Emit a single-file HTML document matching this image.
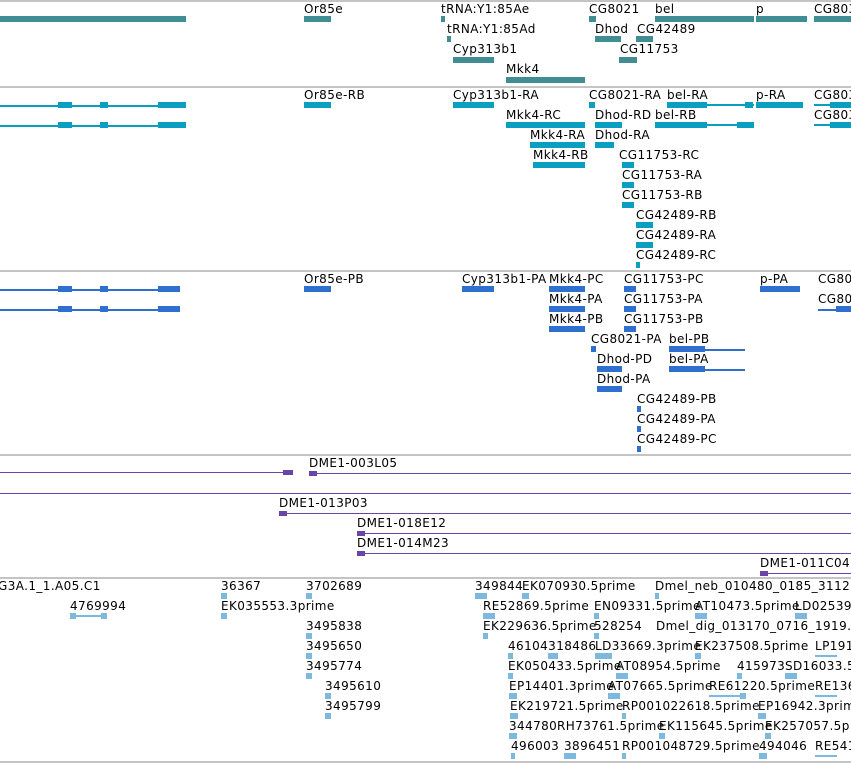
<!DOCTYPE html><html><head><style>
body{margin:0;width:851px;height:763px;background:#fff;position:relative;overflow:hidden;font-family:"DejaVu Sans","Liberation Sans",sans-serif}
.l{position:absolute;font-size:12px;line-height:13px;color:#000;white-space:nowrap;letter-spacing:0.4px}
.b{position:absolute;height:6px}
.t{position:absolute;height:2px}
.hr{position:absolute;left:0;width:851px;height:2px;background:#c4c4c4}
.g{background:#408e94}.c{background:#0a9fc0}.p{background:#2f6fcf}.v{background:#6a45a8}.s{background:#7db8df}
</style></head><body>
<div class="hr" style="top:0"></div><div class="hr" style="top:86px"></div><div class="hr" style="top:270px"></div><div class="hr" style="top:454px"></div><div class="hr" style="top:577px"></div><div class="hr" style="top:761px"></div>

<div class="b g" style="left:0;top:16px;width:186px"></div>
<div class="l" style="left:304px;top:3px">Or85e</div><div class="b g" style="left:304px;top:16px;width:27px"></div>
<div class="l" style="left:441px;top:3px">tRNA:Y1:85Ae</div><div class="b g" style="left:441px;top:16px;width:4px"></div>
<div class="l" style="left:447px;top:23px">tRNA:Y1:85Ad</div><div class="b g" style="left:447px;top:36px;width:4px"></div>
<div class="l" style="left:453px;top:43px">Cyp313b1</div><div class="b g" style="left:453px;top:57px;width:41px"></div>
<div class="l" style="left:506px;top:63px">Mkk4</div><div class="b g" style="left:506px;top:77px;width:79px"></div>
<div class="l" style="left:589px;top:3px">CG8021</div><div class="b g" style="left:589px;top:16px;width:7px"></div>
<div class="l" style="left:595px;top:23px">Dhod</div><div class="b g" style="left:595px;top:36px;width:26px"></div>
<div class="l" style="left:637px;top:23px">CG42489</div><div class="b g" style="left:636px;top:36px;width:17px"></div>
<div class="l" style="left:620px;top:43px">CG11753</div><div class="b g" style="left:619px;top:57px;width:18px"></div>
<div class="l" style="left:655px;top:3px">bel</div><div class="b g" style="left:655px;top:16px;width:99px"></div>
<div class="l" style="left:756px;top:3px">p</div><div class="b g" style="left:756px;top:16px;width:51px"></div>
<div class="l" style="left:814px;top:3px">CG803</div><div class="b g" style="left:814px;top:16px;width:37px"></div>

<div class="t c" style="left:0;top:105px;width:160px"></div><div class="b c" style="left:158px;top:102px;width:28px"></div>
<div class="b c" style="left:58px;top:102px;width:14px"></div><div class="b c" style="left:100px;top:102px;width:8px"></div>
<div class="t c" style="left:0;top:125px;width:160px"></div><div class="b c" style="left:158px;top:122px;width:28px"></div>
<div class="b c" style="left:58px;top:122px;width:14px"></div><div class="b c" style="left:100px;top:122px;width:8px"></div>
<div class="l" style="left:304px;top:89px">Or85e-RB</div><div class="b c" style="left:304px;top:102px;width:27px"></div>
<div class="l" style="left:453px;top:89px">Cyp313b1-RA</div><div class="b c" style="left:453px;top:102px;width:41px"></div>
<div class="l" style="left:589px;top:89px">CG8021-RA</div><div class="b c" style="left:589px;top:102px;width:6px"></div>
<div class="l" style="left:667px;top:89px">bel-RA</div><div class="b c" style="left:667px;top:102px;width:40px"></div><div class="t c" style="left:707px;top:104px;width:47px"></div><div class="b c" style="left:745px;top:102px;width:8px"></div>
<div class="l" style="left:756px;top:89px">p-RA</div><div class="b c" style="left:756px;top:102px;width:47px"></div>
<div class="l" style="left:814px;top:89px">CG803</div><div class="t c" style="left:814px;top:104px;width:37px"></div><div class="b c" style="left:830px;top:102px;width:21px"></div>
<div class="l" style="left:506px;top:109px">Mkk4-RC</div><div class="b c" style="left:506px;top:122px;width:79px"></div>
<div class="l" style="left:595px;top:109px">Dhod-RD</div><div class="b c" style="left:595px;top:122px;width:27px"></div>
<div class="l" style="left:655px;top:109px">bel-RB</div><div class="b c" style="left:655px;top:122px;width:52px"></div><div class="t c" style="left:707px;top:124px;width:47px"></div><div class="b c" style="left:737px;top:122px;width:17px"></div>
<div class="l" style="left:814px;top:109px">CG803</div><div class="t c" style="left:814px;top:124px;width:37px"></div><div class="b c" style="left:830px;top:122px;width:21px"></div>
<div class="l" style="left:530px;top:129px">Mkk4-RA</div><div class="b c" style="left:530px;top:142px;width:55px"></div>
<div class="l" style="left:595px;top:129px">Dhod-RA</div><div class="b c" style="left:595px;top:142px;width:19px"></div>
<div class="l" style="left:533px;top:149px">Mkk4-RB</div><div class="b c" style="left:533px;top:162px;width:52px"></div>
<div class="l" style="left:619px;top:149px">CG11753-RC</div><div class="b c" style="left:622px;top:162px;width:12px"></div>
<div class="l" style="left:622px;top:169px">CG11753-RA</div><div class="b c" style="left:622px;top:182px;width:12px"></div>
<div class="l" style="left:622px;top:189px">CG11753-RB</div><div class="b c" style="left:622px;top:202px;width:12px"></div>
<div class="l" style="left:636px;top:209px">CG42489-RB</div><div class="b c" style="left:636px;top:222px;width:17px"></div>
<div class="l" style="left:636px;top:229px">CG42489-RA</div><div class="b c" style="left:636px;top:242px;width:17px"></div>
<div class="l" style="left:636px;top:249px">CG42489-RC</div><div class="b c" style="left:636px;top:262px;width:4px"></div>

<div class="t p" style="left:0;top:289px;width:160px"></div><div class="b p" style="left:158px;top:286px;width:22px"></div>
<div class="b p" style="left:58px;top:286px;width:14px"></div><div class="b p" style="left:100px;top:286px;width:8px"></div>
<div class="t p" style="left:0;top:309px;width:160px"></div><div class="b p" style="left:158px;top:306px;width:22px"></div>
<div class="b p" style="left:58px;top:306px;width:14px"></div><div class="b p" style="left:100px;top:306px;width:8px"></div>
<div class="l" style="left:304px;top:273px">Or85e-PB</div><div class="b p" style="left:304px;top:286px;width:27px"></div>
<div class="l" style="left:462px;top:273px">Cyp313b1-PA</div><div class="b p" style="left:462px;top:286px;width:32px"></div>
<div class="l" style="left:549px;top:273px">Mkk4-PC</div><div class="b p" style="left:549px;top:286px;width:36px"></div>
<div class="l" style="left:624px;top:273px">CG11753-PC</div><div class="b p" style="left:624px;top:286px;width:12px"></div>
<div class="l" style="left:760px;top:273px">p-PA</div><div class="b p" style="left:760px;top:286px;width:40px"></div>
<div class="l" style="left:818px;top:273px">CG80</div>
<div class="l" style="left:549px;top:293px">Mkk4-PA</div><div class="b p" style="left:549px;top:306px;width:36px"></div>
<div class="l" style="left:624px;top:293px">CG11753-PA</div><div class="b p" style="left:624px;top:306px;width:12px"></div>
<div class="l" style="left:818px;top:293px">CG80</div><div class="t p" style="left:818px;top:309px;width:33px"></div><div class="b p" style="left:836px;top:306px;width:15px"></div>
<div class="l" style="left:549px;top:313px">Mkk4-PB</div><div class="b p" style="left:549px;top:326px;width:36px"></div>
<div class="l" style="left:624px;top:313px">CG11753-PB</div><div class="b p" style="left:624px;top:326px;width:12px"></div>
<div class="l" style="left:591px;top:333px">CG8021-PA</div><div class="b p" style="left:591px;top:346px;width:5px"></div>
<div class="l" style="left:669px;top:333px">bel-PB</div><div class="b p" style="left:669px;top:346px;width:36px"></div><div class="t p" style="left:705px;top:349px;width:40px"></div>
<div class="l" style="left:597px;top:353px">Dhod-PD</div><div class="b p" style="left:597px;top:366px;width:25px"></div>
<div class="l" style="left:669px;top:353px">bel-PA</div><div class="b p" style="left:669px;top:366px;width:36px"></div><div class="t p" style="left:705px;top:369px;width:40px"></div>
<div class="l" style="left:597px;top:373px">Dhod-PA</div><div class="b p" style="left:597px;top:386px;width:25px"></div>
<div class="l" style="left:637px;top:393px">CG42489-PB</div><div class="b p" style="left:637px;top:406px;width:4px"></div>
<div class="l" style="left:637px;top:413px">CG42489-PA</div><div class="b p" style="left:637px;top:426px;width:4px"></div>
<div class="l" style="left:637px;top:433px">CG42489-PC</div><div class="b p" style="left:637px;top:446px;width:4px"></div>

<div class="t v" style="left:0;top:472px;width:293px;height:1px"></div><div class="b v" style="left:283px;top:470px;width:10px;height:5px"></div>
<div class="l" style="left:309px;top:457px">DME1-003L05</div><div class="t v" style="left:309px;top:473px;width:542px;height:1px"></div><div class="b v" style="left:309px;top:471px;width:8px;height:5px"></div>
<div class="t v" style="left:0;top:493px;width:851px;height:1px"></div>
<div class="l" style="left:279px;top:497px">DME1-013P03</div><div class="t v" style="left:279px;top:513px;width:572px;height:1px"></div><div class="b v" style="left:279px;top:511px;width:8px;height:5px"></div>
<div class="l" style="left:357px;top:517px">DME1-018E12</div><div class="t v" style="left:357px;top:533px;width:494px;height:1px"></div><div class="b v" style="left:357px;top:531px;width:8px;height:5px"></div>
<div class="l" style="left:357px;top:537px">DME1-014M23</div><div class="t v" style="left:357px;top:553px;width:494px;height:1px"></div><div class="b v" style="left:357px;top:551px;width:8px;height:5px"></div>
<div class="l" style="left:760px;top:557px">DME1-011C04</div><div class="t v" style="left:760px;top:573px;width:91px;height:1px"></div><div class="b v" style="left:760px;top:571px;width:8px;height:5px"></div>

<div class="l" style="left:-2px;top:580px">G3A.1_1.A05.C1</div>
<div class="l" style="left:221px;top:580px">36367</div><div class="b s" style="left:221px;top:593px;width:6px"></div>
<div class="l" style="left:306px;top:580px">3702689</div><div class="b s" style="left:306px;top:593px;width:6px"></div>
<div class="l" style="left:475px;top:580px">349844</div><div class="b s" style="left:475px;top:593px;width:12px"></div>
<div class="l" style="left:522px;top:580px">EK070930.5prime</div><div class="b s" style="left:522px;top:593px;width:7px"></div>
<div class="l" style="left:655px;top:580px">Dmel_neb_010480_0185_3112.3</div><div class="b s" style="left:655px;top:593px;width:4px"></div>
<div class="l" style="left:70px;top:600px">4769994</div><div class="t s" style="left:70px;top:615px;width:37px"></div><div class="b s" style="left:70px;top:613px;width:6px"></div><div class="b s" style="left:101px;top:613px;width:6px"></div>
<div class="l" style="left:221px;top:600px">EK035553.3prime</div><div class="b s" style="left:221px;top:613px;width:6px"></div>
<div class="l" style="left:483px;top:600px">RE52869.5prime</div><div class="b s" style="left:483px;top:613px;width:12px"></div>
<div class="l" style="left:594px;top:600px">EN09331.5prime</div><div class="b s" style="left:594px;top:613px;width:5px"></div>
<div class="l" style="left:695px;top:600px">AT10473.5prime</div><div class="b s" style="left:695px;top:613px;width:12px"></div>
<div class="l" style="left:795px;top:600px">LD02539</div><div class="b s" style="left:795px;top:613px;width:12px"></div>
<div class="l" style="left:306px;top:620px">3495838</div><div class="b s" style="left:306px;top:633px;width:6px"></div>
<div class="l" style="left:483px;top:620px">EK229636.5prime</div><div class="b s" style="left:483px;top:633px;width:5px"></div>
<div class="l" style="left:594px;top:620px">528254</div><div class="b s" style="left:594px;top:633px;width:5px"></div>
<div class="l" style="left:656px;top:620px">Dmel_dig_013170_0716_1919.3</div>
<div class="l" style="left:306px;top:640px">3495650</div><div class="b s" style="left:306px;top:653px;width:6px"></div>
<div class="l" style="left:508px;top:640px">46104318486</div><div class="b s" style="left:508px;top:653px;width:5px"></div><div class="b s" style="left:548px;top:653px;width:10px"></div>
<div class="l" style="left:595px;top:640px">LD33669.3prime</div><div class="b s" style="left:595px;top:653px;width:17px"></div>
<div class="l" style="left:695px;top:640px">EK237508.5prime</div><div class="b s" style="left:695px;top:653px;width:6px"></div>
<div class="l" style="left:815px;top:640px">LP191</div><div class="t s" style="left:815px;top:655px;width:22px"></div>
<div class="l" style="left:306px;top:660px">3495774</div><div class="b s" style="left:306px;top:673px;width:6px"></div>
<div class="l" style="left:508px;top:660px">EK050433.5prime</div><div class="b s" style="left:508px;top:673px;width:5px"></div>
<div class="l" style="left:616px;top:660px">AT08954.5prime</div><div class="b s" style="left:616px;top:673px;width:12px"></div>
<div class="l" style="left:737px;top:660px">415973</div><div class="b s" style="left:737px;top:673px;width:5px"></div>
<div class="l" style="left:785px;top:660px">SD16033.5</div><div class="b s" style="left:785px;top:673px;width:12px"></div>
<div class="l" style="left:325px;top:680px">3495610</div><div class="b s" style="left:325px;top:693px;width:6px"></div>
<div class="l" style="left:509px;top:680px">EP14401.3prime</div><div class="b s" style="left:509px;top:693px;width:8px"></div>
<div class="l" style="left:608px;top:680px">AT07665.5prime</div><div class="b s" style="left:608px;top:693px;width:12px"></div>
<div class="l" style="left:709px;top:680px">RE61220.5prime</div><div class="t s" style="left:709px;top:695px;width:37px"></div><div class="b s" style="left:740px;top:693px;width:6px"></div>
<div class="l" style="left:815px;top:680px">RE136</div><div class="t s" style="left:815px;top:695px;width:22px"></div>
<div class="l" style="left:325px;top:700px">3495799</div><div class="b s" style="left:325px;top:713px;width:6px"></div>
<div class="l" style="left:510px;top:700px">EK219721.5prime</div><div class="b s" style="left:510px;top:713px;width:8px"></div>
<div class="l" style="left:622px;top:700px">RP001022618.5prime</div><div class="b s" style="left:622px;top:713px;width:4px"></div>
<div class="l" style="left:758px;top:700px">EP16942.3prime</div><div class="b s" style="left:758px;top:713px;width:8px"></div>
<div class="l" style="left:509px;top:720px">344780</div><div class="b s" style="left:509px;top:733px;width:8px"></div>
<div class="l" style="left:557px;top:720px">RH73761.5prime</div>
<div class="l" style="left:659px;top:720px">EK115645.5prime</div><div class="b s" style="left:659px;top:733px;width:6px"></div>
<div class="l" style="left:765px;top:720px">EK257057.5p</div><div class="b s" style="left:765px;top:733px;width:6px"></div>
<div class="l" style="left:511px;top:740px">496003</div><div class="b s" style="left:511px;top:753px;width:4px"></div>
<div class="l" style="left:564px;top:740px">3896451</div><div class="b s" style="left:564px;top:753px;width:12px"></div>
<div class="l" style="left:622px;top:740px">RP001048729.5prime</div><div class="b s" style="left:622px;top:753px;width:4px"></div>
<div class="l" style="left:759px;top:740px">494046</div><div class="b s" style="left:759px;top:753px;width:8px"></div>
<div class="l" style="left:815px;top:740px">RE541</div><div class="t s" style="left:815px;top:755px;width:22px"></div>
</body></html>
